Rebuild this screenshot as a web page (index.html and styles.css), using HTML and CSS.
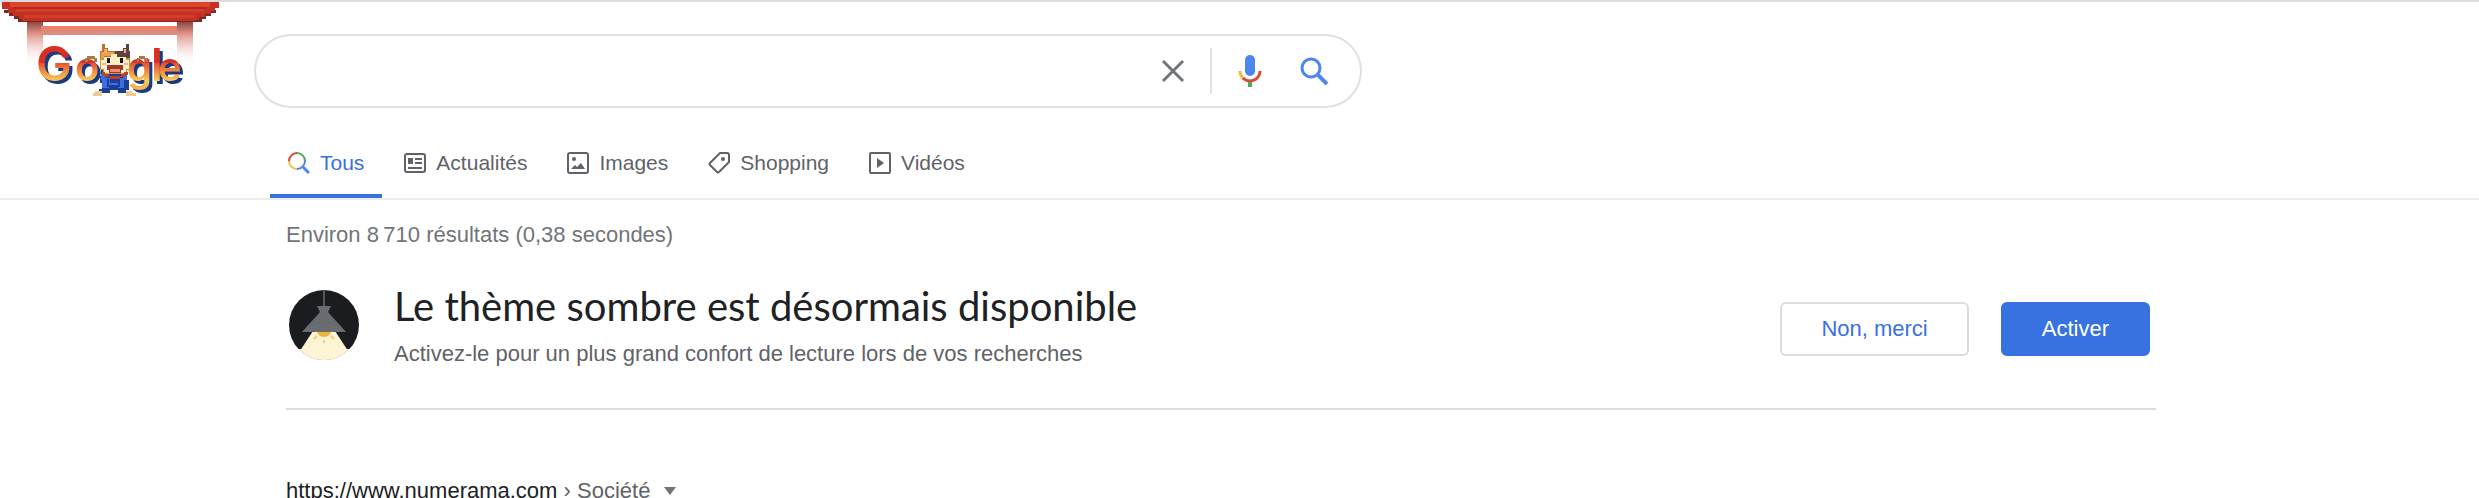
FILE: index.html
```html
<!DOCTYPE html>
<html lang="fr">
<head>
  <meta charset="UTF-8">
  <meta name="viewport" content="width=device-width, initial-scale=1.0">
  <title>Recherche Google</title>
  <link rel="stylesheet" href="styles.css">
</head>
<body>
  <header class="header">
    <a class="logo" href="#" aria-label="Google">
      <svg width="220" height="98" viewBox="0 0 220 98" shape-rendering="crispEdges" aria-hidden="true">
        <defs>
          <linearGradient id="post" x1="0" y1="0" x2="0" y2="1">
            <stop offset="0" stop-color="#8a4a44"/>
            <stop offset="0.25" stop-color="#dd8e84"/>
            <stop offset="1" stop-color="#ffffff" stop-opacity="0"/>
          </linearGradient>
          <linearGradient id="beam" x1="0" y1="0" x2="0" y2="1">
            <stop offset="0" stop-color="#ee8066"/>
            <stop offset="1" stop-color="#d89088"/>
          </linearGradient>
          <linearGradient id="letters" gradientUnits="userSpaceOnUse" x1="0" y1="46" x2="0" y2="94">
            <stop offset="0.34" stop-color="#d92f22"/>
            <stop offset="0.36" stop-color="#e8502f"/>
            <stop offset="0.5" stop-color="#ee8340"/>
            <stop offset="0.72" stop-color="#f8cc58"/>
            <stop offset="0.84" stop-color="#f4b050"/>
            <stop offset="1" stop-color="#f9d65c"/>
          </linearGradient>
        </defs>
        <!-- gate -->
        <path fill="url(#post)" d="M27 22h16v44H27zM177 22h16v44h-16z"/>
        <path fill="#fff" d="M43 22h134v4H43z"/>
        <path fill="url(#beam)" d="M41 26h136v9H41z"/>
        <path fill="#7a2a22" d="M4 10h8v3H4zM9 13h8v3H9zM14 16h8v3h-8zM18 19h184v3H18zM208 10h8v3h-8zM203 13h8v3h-8zM198 16h8v3h-8z"/>
        <path fill="#c43024" d="M2 2h217v6h-4v3h-4v3h-6v3h-6v3h-4v1H22v-2h-3v-3h-6v-3H8v-4H2z"/>
        <path fill="#e0452b" d="M10 2h200v5H10z"/>
        <path fill="#b02b1c" d="M14 7h192v2H14z"/>
        <path fill="#d23c2a" d="M16 9h188v3H16zM24 15h170v3H24z"/>
        <!-- letters -->
        <g class="logo-letters">
          <text x="36" y="81" font-size="48">G</text>
          <text x="75" y="81" font-size="40">o</text>
          <text x="127" y="81" font-size="40">g</text>
          <text x="151" y="81" font-size="45">l</text>
          <text x="158" y="81" font-size="40">e</text>
        </g>
        <!-- cat -->
        <path fill="#a87a42" d="M87 56h8v2h2v4h-3v-3h-6v3h-3v-4h2zM139 56h6v2h3v4h-3v-3h-6v3h-2v-4h2z"/>
        <path fill="#1b3f96" d="M101 70h26v10h2v10h-3v3h-8v-3h-8v3H99v-4h3v-6h-2z"/>
        <path fill="#3d6fe0" d="M101 74h4v4h5v5h10v-5h3v-4h4v6h-3v8h-6v-3h-9v3h-7v-8h-1z"/>
        <path fill="#1b3f96" d="M107 79h2v8h-2zM118 79h2v8h-2z"/>
        <path fill="#eacb94" d="M95 91h7v5h-9v-3h2zM126 91h6v2h4v3h-10z"/>
        <path fill="#b9722d" d="M102 44h3v4h3v3h8v8h-16V51h2z"/>
        <path fill="#5e4139" d="M129 44h-3v4h-3v3h-8v8h15V51h-1z"/>
        <path fill="#f0a04a" d="M104 49h2v3h8v4h-10v3h-3v-7h3z"/>
        <path fill="#c8973f" d="M100 58h30v12h-3v4h-24v-4h-3z"/>
        <path fill="#fbf0c4" d="M104 57h7v-3h6v3h9v3h3v9h-3v4h-22v-4h-3v-9h3z"/>
        <path fill="#17191f" d="M107 58h3v5h-3zM120 58h3v5h-3z"/>
        <path fill="#f3b29f" d="M102 63h4v2h-4zM124 63h4v2h-4zM105 49h2v4h-2zM124 49h2v4h-2z"/>
        <path fill="#9e392e" d="M107 65h16v5h-2v3h-12v-3h-2z"/>
        <path fill="#ee8c74" d="M110 69h10v3h-10z"/>
        <path fill="#c63b24" d="M102 72h3v2h4v2h12v-2h3v-2h4v3h-3v2h-5v2h-10v-2h-5v-2h-3z"/>
      </svg>
    </a>
    <form class="search-box" role="search">
      <input class="search-input" type="text" aria-label="Rechercher" autocomplete="off">
      <button class="icon-button clear" type="reset" aria-label="Effacer">
        <svg width="24" height="24" viewBox="0 0 24 24"><path d="M2 2l20 20M22 2L2 22" fill="none" stroke="#70757a" stroke-width="3"/></svg>
      </button>
      <span class="separator"></span>
      <button class="icon-button" type="button" aria-label="Recherche vocale">
        <svg width="24" height="34" viewBox="0 0 24 34">
          <rect x="7" y="1" width="10" height="21" rx="5" fill="#4f86ee"/>
          <path d="M2 17a10 10 0 0 0 4 8" fill="none" stroke="#f5bd3c" stroke-width="3"/>
          <path d="M5 24a10 10 0 0 0 17-7" fill="none" stroke="#da4a3c" stroke-width="3"/>
          <path d="M12 28v5" stroke="#55a55a" stroke-width="4"/>
        </svg>
      </button>
      <button class="icon-button" type="submit" aria-label="Rechercher">
        <svg width="28" height="28" viewBox="0 0 28 28"><circle cx="11" cy="11" r="9" fill="none" stroke="#4f86ee" stroke-width="3"/><path d="M18 18l9 9" stroke="#4f86ee" stroke-width="4"/></svg>
      </button>
    </form>
  </header>

  <nav class="tabs">
    <a class="tab active" href="#">
      <svg width="22" height="22" viewBox="0 0 22 22" fill="none" stroke-width="2">
        <path d="M1 9a8 8 0 0 1 8-8" stroke="#d9483b"/>
        <path d="M9 1a8 8 0 0 1 8 8" stroke="#55a55a"/>
        <path d="M9 17a8 8 0 0 1-8-8" stroke="#f2bb41"/>
        <path d="M17 9a8 8 0 0 1-8 8" stroke="#4f86ee"/>
        <path d="M14 14l7 7" stroke="#4f86ee" stroke-width="3"/>
      </svg>
      Tous
    </a>
    <a class="tab" href="#">
      <svg width="22" height="22" viewBox="0 0 22 22">
        <rect x="1" y="2" width="20" height="18" rx="2" fill="none" stroke="#5f6368" stroke-width="2"/>
        <path fill="#5f6368" d="M4 6h5v6H4zM11 6h7v2h-7zM11 10h7v2h-7zM4 15h14v2H4z"/>
      </svg>
      Actualités
    </a>
    <a class="tab" href="#">
      <svg width="22" height="22" viewBox="0 0 22 22">
        <rect x="1" y="1" width="20" height="20" rx="2" fill="none" stroke="#5f6368" stroke-width="2"/>
        <circle cx="7" cy="7" r="2" fill="#5f6368"/>
        <path fill="#5f6368" d="M4 17l4-4 2 2 4-4 4 6z"/>
      </svg>
      Images
    </a>
    <a class="tab" href="#">
      <svg width="22" height="22" viewBox="0 0 22 22">
        <path d="M12 1h7q2 0 2 2v7L11 20q-1 1-2 0L2 13q-1-1 0-2z" fill="none" stroke="#5f6368" stroke-width="2"/>
        <circle cx="15" cy="7" r="2" fill="#5f6368"/>
      </svg>
      Shopping
    </a>
    <a class="tab" href="#">
      <svg width="22" height="22" viewBox="0 0 22 22">
        <rect x="1" y="1" width="20" height="20" rx="1" fill="none" stroke="#5f6368" stroke-width="2"/>
        <path fill="#5f6368" d="M8 6l7 5-7 5z"/>
      </svg>
      Vidéos
    </a>
  </nav>

  <main class="content">
    <p class="stats">Environ 8&#8239;710 résultats (0,38 secondes)</p>

    <section class="promo">
      <svg class="promo-icon" width="70" height="70" viewBox="0 0 70 70" aria-hidden="true">
        <clipPath id="disc"><circle cx="35" cy="35" r="35"/></clipPath>
        <g clip-path="url(#disc)">
          <rect width="70" height="70" fill="#1b1c20"/>
          <path d="M24 41h22l19 29H5z" fill="#fdf3d5"/>
          <path d="M0 59h70v11H0z" fill="#fdf3d5"/>
          <path d="M35 0v17" stroke="#55585d" stroke-width="2"/>
          <path d="M28 16h14l-3 6 18 20H13l18-20z" fill="#696c71"/>
          <path d="M28 42h14q-2 5-7 5t-7-5z" fill="#edb537"/>
          <path d="M28 46l-3 3M42 46l3 3M35 50v3" stroke="#f4cf72" stroke-width="2"/>
        </g>
      </svg>
      <div class="promo-text">
        <h1 class="promo-title">Le thème sombre est désormais disponible</h1>
        <p class="promo-subtitle">Activez-le pour un plus grand confort de lecture lors de vos recherches</p>
      </div>
      <div class="promo-actions">
        <button class="button" type="button">Non, merci</button>
        <button class="button primary" type="button">Activer</button>
      </div>
    </section>

    <article class="result">
      <a class="result-url" href="#">https://www.numerama.com<span class="crumb"> › Société</span></a>
      <button class="result-menu" type="button" aria-label="Options du résultat">
        <svg width="12" height="8" viewBox="0 0 12 8"><path d="M0 0h12L6 8z" fill="#70757a"/></svg>
      </button>
    </article>
  </main>
</body>
</html>
```
FILE: styles.css
```css
* {
  box-sizing: border-box;
}
body {
  margin: 0;
  border-top: 2px solid #dadce0;
  background-color: #fff;
  color: #202124;
  font-family: "Liberation Sans", Arial, sans-serif;
  font-size: 22px;
  line-height: 26px;
  overflow: hidden;
}
a {
  color: inherit;
  text-decoration: none;
}
button {
  font: inherit;
  cursor: pointer;
}
svg {
  display: block;
  flex-shrink: 0;
}

/* Header */
.header {
  display: flex;
  align-items: flex-start;
  gap: 34px;
  height: 126px;
}
.logo {
  margin-top: -2px;
}
.logo-letters {
  fill: url(#letters);
  font-family: Inter, sans-serif;
  font-weight: 600;
  filter: drop-shadow(3px 3px 0 #173a80);
}
.search-box {
  display: flex;
  align-items: center;
  width: 1108px;
  height: 74px;
  margin-top: 32px;
  padding-right: 30px;
  border: 2px solid #dfe1e5;
  border-radius: 37px;
}
.search-input {
  flex: 1;
  min-width: 0;
  height: 60px;
  padding: 0 36px;
  border: 0;
  outline: none;
  background: transparent;
  font: inherit;
}
.icon-button {
  display: flex;
  align-items: center;
  justify-content: center;
  width: 64px;
  height: 60px;
  padding: 0;
  border: 0;
  background: transparent;
}
.icon-button:last-child {
  width: 32px;
  margin-left: 16px;
}
.icon-button.clear {
  width: 74px;
}
.separator {
  width: 2px;
  height: 46px;
  margin-right: 6px;
  background-color: #dfe1e5;
}

/* Tabs */
.tabs {
  display: flex;
  gap: 4px;
  height: 72px;
  padding-left: 270px;
  border-bottom: 2px solid #ebebeb;
}
.tab {
  display: flex;
  align-items: center;
  gap: 10px;
  padding: 0 18px;
  color: #5f6368;
  font-size: 21px;
}
.tab.active {
  box-shadow: inset 0 -4px #3871e0;
  color: #3871e0;
}

/* Results */
.content {
  width: 1870px;
  margin-left: 286px;
}
.stats {
  margin: 0;
  padding: 22px 0 20px;
  color: #70757a;
}
.promo {
  display: flex;
  align-items: center;
  padding: 14px 6px 41px 3px;
  border-bottom: 2px solid #dadce0;
}
.promo-text {
  flex: 1;
  margin-left: 35px;
}
.promo-title {
  margin: 0;
  font-family: Lato, sans-serif;
  font-size: 40px;
  font-weight: normal;
  line-height: 48px;
}
.promo-subtitle {
  margin: 11px 0 0;
  color: #5f6368;
}
.promo-actions {
  display: flex;
  gap: 32px;
  margin-top: 8px;
}
.button {
  height: 54px;
  padding: 0 39px;
  border: 2px solid #dadce0;
  border-radius: 6px;
  background-color: #fff;
  color: #3871e0;
}
.button.primary {
  border-color: #3871e0;
  background-color: #3871e0;
  color: #fff;
}
.result {
  display: flex;
  align-items: center;
  gap: 14px;
  padding-top: 68px;
}
.crumb {
  color: #5f6368;
}
.result-menu {
  padding: 0;
  border: 0;
  background: transparent;
}
```
